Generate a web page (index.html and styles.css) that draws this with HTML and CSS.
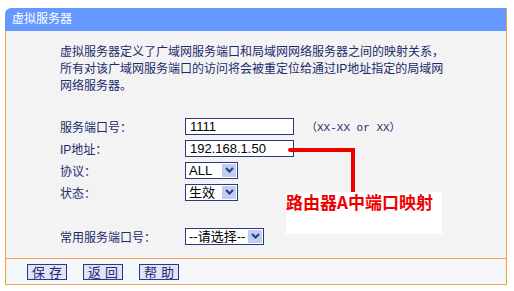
FILE: index.html
```html
<!DOCTYPE html>
<html>
<head>
    <title>虚拟服务器</title>
    <link rel="stylesheet" href="styles.css">
</head>
<body>
    <div class="panel">
        <div class="title">虚拟服务器</div>
        <div class="content">
            <p class="intro">虚拟服务器定义了广域网服务端口和局域网网络服务器之间的映射关系，<br>所有对该广域网服务端口的访问将会被重定位给通过IP地址指定的局域网<br>网络服务器。</p>
            <div class="form">
                <span class="label">服务端口号：</span>
                <div class="field"><span class="input">1111</span><span class="hint">（XX-XX or XX）</span></div>
                <span class="label">IP地址：</span>
                <div class="field"><span class="input">192.168.1.50</span></div>
                <span class="label">协议：</span>
                <div class="field">
                    <span class="select sel-short"><span class="val">ALL</span><span class="drop"><svg width="9" height="6" viewBox="0 0 9 6"><polyline points="1,1 4.5,4.5 8,1" fill="none" stroke="#2a3a80" stroke-width="2"/></svg></span></span>
                </div>
                <span class="label">状态：</span>
                <div class="field">
                    <span class="select sel-short"><span class="val">生效</span><span class="drop"><svg width="9" height="6" viewBox="0 0 9 6"><polyline points="1,1 4.5,4.5 8,1" fill="none" stroke="#2a3a80" stroke-width="2"/></svg></span></span>
                </div>
                <span class="spacer"></span>
                <span class="spacer"></span>
                <span class="label">常用服务端口号：</span>
                <div class="field">
                    <span class="select sel-long"><span class="val">--请选择--</span><span class="drop"><svg width="9" height="6" viewBox="0 0 9 6"><polyline points="1,1 4.5,4.5 8,1" fill="none" stroke="#2a3a80" stroke-width="2"/></svg></span></span>
                </div>
            </div>
        </div>
        <div class="footer">
            <button>保存</button>
            <button>返回</button>
            <button>帮助</button>
        </div>

        <svg class="pointer" width="80" height="60" viewBox="0 0 80 60">
            <polyline points="6,10 69,10 69,52" fill="none" stroke="#ee0000" stroke-width="4" stroke-linecap="round"/>
        </svg>
        <div class="note">路由器A中端口映射</div>
    </div>
</body>
</html>
```

FILE: styles.css
```css
body {
    margin: 0;
    background-color: #ffffff;
    font-family: "Liberation Sans", "Noto Sans CJK SC", sans-serif;
    font-size: 12px;
    color: #1b2b6c;
}
.panel {
    position: relative;
    width: 502px;
    margin: 8px 0 0 5px;
}
.title {
    height: 23px;
    line-height: 23px;
    padding-left: 7px;
    background-color: #6699ff;
    color: #ffffff;
    font-size: 12px;
    border-top-left-radius: 6px;
    border-right: 1px solid #f0a24f;
}
.content {
    height: 227px;
    box-sizing: border-box;
    padding: 13px 0 0 54px;
    background-color: #f3f3f3;
    border-left: 1px solid #f0a24f;
    border-right: 1px solid #f0a24f;
}
.intro {
    margin: 0;
    line-height: 17px;
}
.form {
    display: grid;
    grid-template-columns: 125px 1fr;
    grid-auto-rows: 22px;
    align-items: center;
    margin-top: 20px;
}
.field {
    display: flex;
    align-items: center;
}
.input {
    width: 109px;
    height: 17px;
    box-sizing: border-box;
    border: 1px solid #2a3a80;
    background-color: #ffffff;
    color: #000000;
    font-size: 13px;
    line-height: 15px;
    padding-left: 4px;
}
.hint {
    margin-left: 12px;
    font-family: "Liberation Mono", "Noto Sans CJK SC", monospace;
    font-size: 11px;
    color: #1b2b6c;
}
.select {
    display: flex;
    align-items: center;
    justify-content: space-between;
    height: 17px;
    box-sizing: border-box;
    border: 1px solid #2a3a80;
    background-color: #ffffff;
    color: #000000;
    font-size: 13px;
}
.sel-short {
    width: 53px;
}
.sel-long {
    width: 79px;
}
.val {
    padding-left: 3px;
    line-height: 15px;
}
.drop {
    display: flex;
    align-items: center;
    justify-content: center;
    width: 14px;
    height: 13px;
    margin-right: 1px;
    background-color: #bfcdf1;
}
.footer {
    display: flex;
    align-items: center;
    gap: 16px;
    height: 25px;
    padding-left: 21px;
    background-color: #f4f6f9;
    border: 1px solid #f0a24f;
}
button {
    width: 40px;
    height: 16px;
    padding: 0;
    border: 1px solid #2a3a80;
    background-color: #dfe4f7;
    color: #1b2b6c;
    font-family: "Noto Sans CJK SC", sans-serif;
    font-size: 13px;
    line-height: 14px;
    letter-spacing: 4px;
    text-indent: 4px;
}
.pointer {
    position: absolute;
    left: 279px;
    top: 132px;
}
.note {
    position: absolute;
    left: 281px;
    top: 184px;
    width: 156px;
    height: 42px;
    background-color: #ffffff;
    color: #ee0000;
    font-family: "Noto Sans CJK SC", sans-serif;
    font-weight: bold;
    font-size: 17px;
    line-height: 20px;
}
```
